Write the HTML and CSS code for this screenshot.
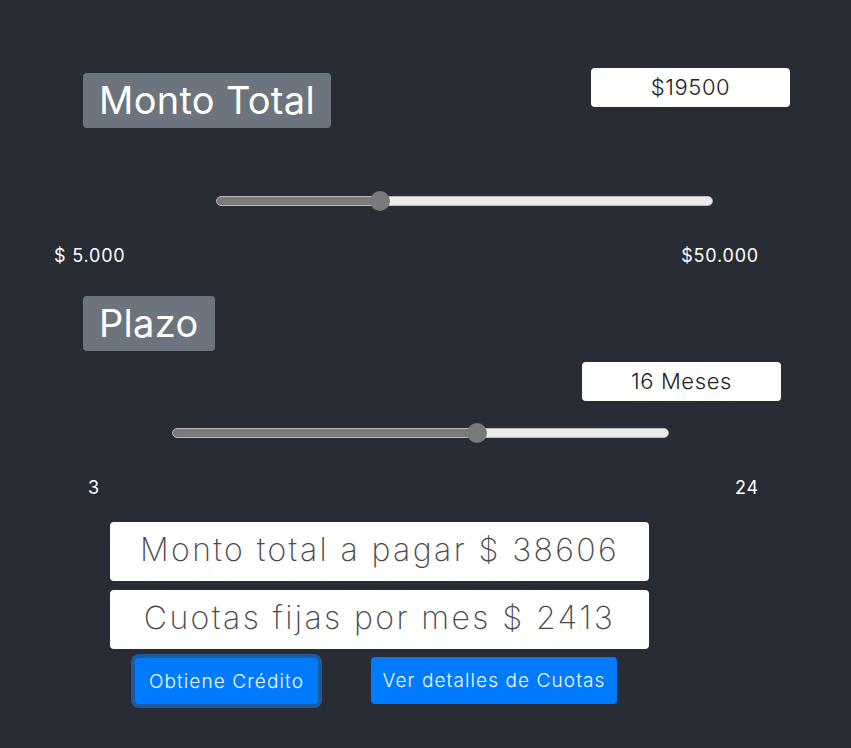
FILE: index.html
```html
<!DOCTYPE html>
<html lang="es">
<head>
<meta charset="utf-8">
<title>Simulador de Crédito</title>
<link rel="stylesheet" href="styles.css">
</head>
<body>
<main class="app">
  <section class="field field-monto">
    <div class="field-head">
      <h2 class="badge">Monto Total</h2>
      <div class="value value-monto">$19500</div>
    </div>
    <div class="slider slider-monto">
      <input class="range" type="range" min="5000" max="50000" value="19500" style="--fill: 32.8%">
    </div>
    <div class="limits limits-monto"><span>$ 5.000</span><span>$50.000</span></div>
  </section>

  <section class="field field-plazo">
    <h2 class="badge">Plazo</h2>
    <div class="value value-plazo">16 Meses</div>
    <div class="slider slider-plazo">
      <input class="range" type="range" min="3" max="24" value="16" style="--fill: 61.4%">
    </div>
    <div class="limits limits-plazo"><span>3</span><span>24</span></div>
  </section>

  <section class="results">
    <div class="result">Monto total a pagar $ 38606</div>
    <div class="result">Cuotas fijas por mes $ 2413</div>
    <div class="actions">
      <button class="btn btn-focus" type="button">Obtiene Crédito</button>
      <button class="btn btn-detail" type="button">Ver detalles de Cuotas</button>
    </div>
  </section>
</main>
</body>
</html>
```

FILE: styles.css
```css
* { box-sizing: border-box; }

html, body {
  margin: 0;
  padding: 0;
  background: #282c34;
}

body {
  width: 851px;
  height: 748px;
  overflow: hidden;
  font-family: "Inter", "Noto Sans", sans-serif;
  color: #fff;
}

.app {
  display: flex;
  flex-direction: column;
}

.field {
  display: flex;
  flex-direction: column;
}

.field-monto { padding-top: 68px; }

.field-head {
  display: flex;
  align-items: flex-start;
}

.badge {
  margin: 0;
  align-self: flex-start;
  height: 55px;
  padding: 0 16px;
  background: #6c757d;
  border-radius: 4px;
  font-weight: 400;
  font-size: 38px;
  line-height: 55px;
  color: #fff;
  letter-spacing: 0.3px;
}

.field-monto .badge { margin: 5px 0 0 83px; }
.field-plazo .badge { margin: 29px 0 0 83px; }

.value {
  width: 199px;
  height: 39px;
  background: #fff;
  border-radius: 4px;
  color: #222;
  font-size: 22px;
  font-weight: 300;
  letter-spacing: 0.6px;
  line-height: 39px;
  text-align: center;
}

.value-monto { margin-left: auto; margin-right: 61px; }
.value-plazo { align-self: flex-end; margin: 11px 70px 0 0; }

.slider { display: flex; }
.slider-monto { margin: 63px 0 0 216px; }
.slider-plazo { margin: 22px 0 0 172px; }

.range {
  -webkit-appearance: none;
  appearance: none;
  margin: 0;
  width: 497px;
  height: 20px;
  background: transparent;
}

.range::-webkit-slider-runnable-track {
  height: 10px;
  border-radius: 5px;
  border: 1px solid #bbb;
  background: linear-gradient(to right, #7a7a7a 0, #7a7a7a var(--fill), #ececec var(--fill), #ececec 100%);
}

.range::-webkit-slider-thumb {
  -webkit-appearance: none;
  appearance: none;
  width: 20px;
  height: 20px;
  border-radius: 50%;
  background: #7a7a7a;
  margin-top: -6px;
  border: none;
}

.limits {
  display: flex;
  justify-content: space-between;
  margin-top: 34px;
  font-size: 18px;
  letter-spacing: 0.8px;
  line-height: 22px;
  color: #fff;
}

.limits-monto { padding: 0 92px 0 54px; }
.limits-plazo { padding: 0 92px 0 88px; }

.results {
  display: flex;
  flex-direction: column;
  gap: 9px;
  padding: 23px 0 0 110px;
}

.result {
  width: 539px;
  height: 59px;
  background: #fff;
  border-radius: 4px;
  color: #4a4a4a;
  font-size: 32px;
  font-weight: 200;
  letter-spacing: 2.4px;
  line-height: 55px;
  text-align: center;
}

.actions {
  display: flex;
  align-items: flex-start;
  gap: 53px;
  margin-left: 25px;
}

.btn {
  height: 47px;
  padding: 0;
  border: none;
  border-radius: 4px;
  background: #007bff;
  color: #f4f8ff;
  font-family: inherit;
  font-size: 19px;
  font-weight: 300;
  letter-spacing: 1.1px;
}

.btn-focus {
  width: 183px;
  height: 46px;
  box-shadow: 0 0 0 4px #1c5c9e;
}

.btn-detail {
  width: 246px;
  margin-top: -1px;
}
```
